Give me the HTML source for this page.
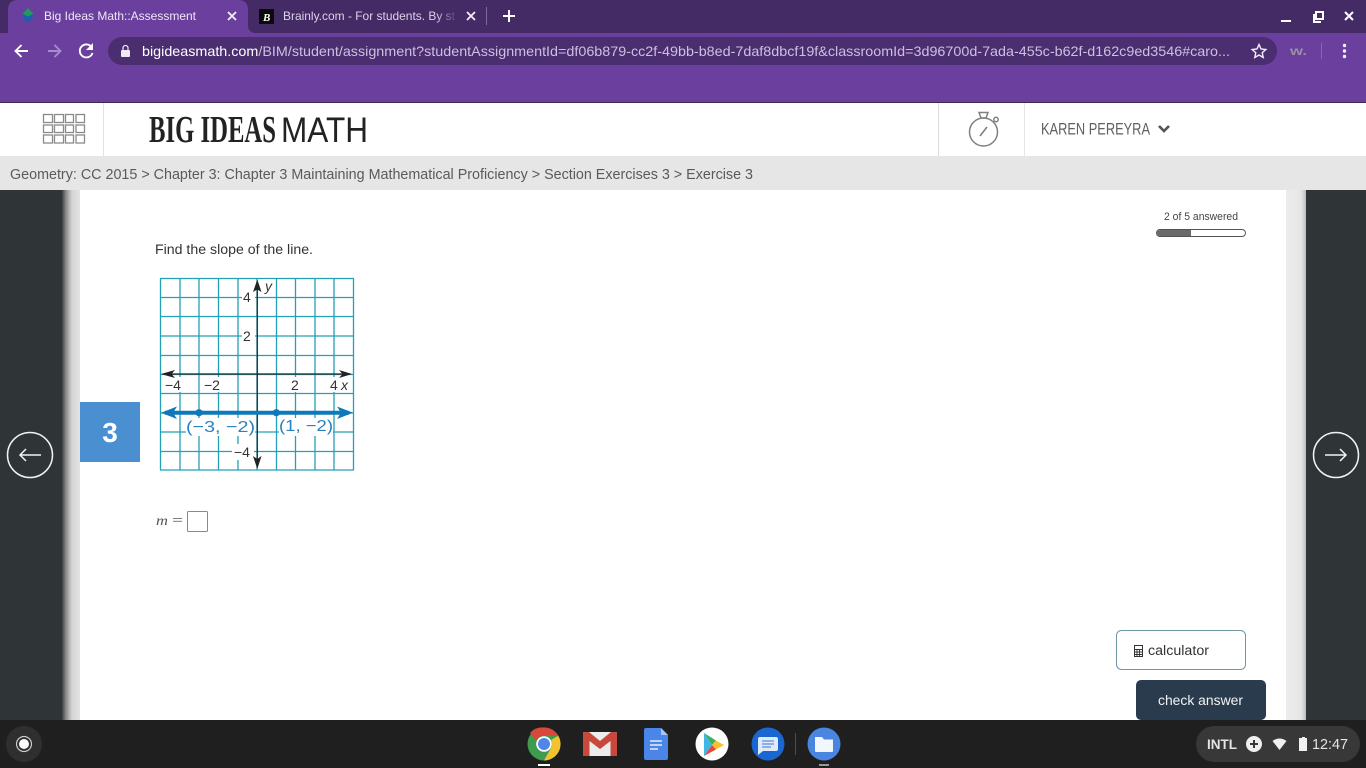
<!DOCTYPE html>
<html><head><meta charset="utf-8"><title>Big Ideas Math</title>
<style>
html,body{margin:0;padding:0;width:1366px;height:768px;overflow:hidden;background:#fff}
svg{display:block;font-family:"Liberation Sans",sans-serif}
</style></head><body>
<svg width="1366" height="768" viewBox="0 0 1366 768" xmlns="http://www.w3.org/2000/svg">
<defs>
<linearGradient id="sl" x1="0" x2="1" y1="0" y2="0"><stop offset="0" stop-color="#3c3f42"/><stop offset=".22" stop-color="#8a8a8a"/><stop offset=".55" stop-color="#d4d4d4"/><stop offset="1" stop-color="#e4e4e4"/></linearGradient>
<linearGradient id="sr" x1="0" x2="1" y1="0" y2="0"><stop offset="0" stop-color="#ececec"/><stop offset=".75" stop-color="#e6e6e6"/><stop offset="1" stop-color="#bdbdbd"/></linearGradient>
<linearGradient id="fade" x1="0" x2="1" y1="0" y2="0"><stop offset="0" stop-color="#452b66" stop-opacity="0"/><stop offset="1" stop-color="#452b66"/></linearGradient>
</defs>
<!-- browser chrome -->
<rect width="1366" height="33" fill="#452b66"/>
<rect y="33" width="1366" height="69" fill="#6a3f9e"/>
<rect y="102" width="1366" height="1" fill="#3d2a55"/>
<path d="M0 33H8V10Q8 0 18 0H238Q248 0 248 10V25Q248 33 256 33H0Z" fill="#6a3f9e"/>
<path d="M0 0H2Q8 0 8 6V26Q8 33 0 33Z" fill="#452b66"/>
<!-- tab 1 -->
<path d="M28 8L33.500 14L28 16.500L22.500 14Z" fill="#1f9a5f"/><path d="M22.500 14L28 16.500L33.500 14V17L28 23L22.500 17Z" fill="#1c5fae"/>
<text x="44" y="20" font-size="12" fill="#efe7f7" textLength="152" lengthAdjust="spacingAndGlyphs">Big Ideas Math::Assessment</text>
<path d="M228 12l8 8M236 12l-8 8" stroke="#f4eefa" stroke-width="1.800"/>
<!-- tab 2 -->
<rect x="259" y="9" width="15" height="15" fill="#0a0a0a"/>
<text x="263" y="21" font-size="11" font-weight="bold" font-style="italic" font-family="'Liberation Serif',serif" fill="#fff">B</text>
<text x="283" y="20" font-size="12" fill="#ddd3e8" textLength="172" lengthAdjust="spacingAndGlyphs">Brainly.com - For students. By st</text>
<rect x="436" y="8" width="22" height="18" fill="url(#fade)"/>
<path d="M467 12l8 8M475 12l-8 8" stroke="#f4eefa" stroke-width="1.800"/>
<rect x="486" y="7" width="1" height="18" fill="#7f6a9b"/>
<path d="M509 10v12M503 16h12" stroke="#fff" stroke-width="2"/>
<!-- window controls -->
<rect x="1281" y="20" width="10" height="2" fill="#fff"/>
<path d="M1313 14h2v7h6v2h-8z" fill="#fff"/>
<rect x="1316" y="12" width="7" height="7" fill="none" stroke="#fff" stroke-width="2"/>
<path d="M1345 12l8 8M1353 12l-8 8" stroke="#fff" stroke-width="2"/>
<!-- toolbar -->
<path d="M28 51H16M21.500 45L15.500 51L21.500 57" fill="none" stroke="#fff" stroke-width="1.900"/>
<path d="M48 51H60M54.500 45L60.500 51L54.500 57" fill="none" stroke="#a88bcb" stroke-width="1.900"/>
<path d="M91.500 47A6.500 6.500 0 1 0 92.500 53" fill="none" stroke="#fff" stroke-width="1.900"/><path d="M93 43v7h-7z" fill="#fff"/>
<rect x="108" y="37" width="1169" height="28" rx="14" fill="#4b2e70"/>
<rect x="121" y="50" width="9" height="7" rx="1" fill="#f0e8f7"/><path d="M123 50v-2a2.500 2.500 0 0 1 5 0v2" fill="none" stroke="#f0e8f7" stroke-width="1.200"/>
<text x="142" y="56" font-size="14" textLength="1088" lengthAdjust="spacingAndGlyphs" fill="#cdbfe0"><tspan fill="#fff">bigideasmath.com</tspan>/BIM/student/assignment?studentAssignmentId=df06b879-cc2f-49bb-b8ed-7daf8dbcf19f&amp;classroomId=3d96700d-7ada-455c-b62f-d162c9ed3546#caro...</text>
<path d="M1259 44.500l2 4.500 4.800.5-3.600 3.200 1 4.800-4.200-2.500-4.200 2.500 1-4.800-3.600-3.200 4.800-.5z" fill="none" stroke="#f4eefa" stroke-width="1.400"/>
<text x="1290" y="55" font-size="12" font-weight="bold" fill="#9a8fa8" textLength="17" lengthAdjust="spacingAndGlyphs">w.</text>
<rect x="1321" y="43" width="1" height="16" fill="#8666ad"/>
<circle cx="1344.500" cy="45.500" r="1.700" fill="#f4eefa"/><circle cx="1344.500" cy="51" r="1.700" fill="#f4eefa"/><circle cx="1344.500" cy="56.500" r="1.700" fill="#f4eefa"/>
<!-- header -->
<rect y="103" width="1366" height="53" fill="#fff"/>
<g fill="none" stroke="#8a8a8a" stroke-width="1.300">
<rect x="43.500" y="114.500" width="9" height="8"/><rect x="54.500" y="114.500" width="9" height="8"/><rect x="65.500" y="114.500" width="8" height="8"/><rect x="76" y="114.500" width="8.500" height="8"/>
<rect x="43.500" y="125" width="9" height="7.500"/><rect x="54.500" y="125" width="9" height="7.500"/><rect x="65.500" y="125" width="8" height="7.500"/><rect x="76" y="125" width="8.500" height="7.500"/>
<rect x="43.500" y="135" width="9" height="8"/><rect x="54.500" y="135" width="9" height="8"/><rect x="65.500" y="135" width="8" height="8"/><rect x="76" y="135" width="8.500" height="8"/>
</g>
<rect x="103" y="103" width="1" height="53" fill="#e2e2e2"/>
<text x="149" y="142" font-size="38" font-weight="bold" font-family="'Liberation Serif',serif" fill="#222" textLength="127" lengthAdjust="spacingAndGlyphs">BIG IDEAS</text>
<text x="281" y="142" font-size="35" fill="#222" textLength="87" lengthAdjust="spacingAndGlyphs">MATH</text>
<rect x="938" y="103" width="1" height="53" fill="#dcdcdc"/><rect x="1024" y="103" width="1" height="53" fill="#e6e6e6"/>
<g fill="none" stroke="#808080" stroke-width="1.500"><circle cx="983.500" cy="132" r="14"/><path d="M979 112.500h9l-2 5.500h-5z"/><circle cx="996" cy="119.500" r="2.200"/><path d="M980 136l7-9" stroke-width="1.600"/></g>
<text x="1041" y="134.500" font-size="16.500" fill="#606060" textLength="109" lengthAdjust="spacingAndGlyphs">KAREN PEREYRA</text>
<path d="M1159 126l5 5 5-5" fill="none" stroke="#555" stroke-width="2.600"/>
<!-- breadcrumb -->
<rect y="156" width="1366" height="34" fill="#e6e6e6"/>
<text x="10" y="179" font-size="15" fill="#5a5a5a" textLength="743" lengthAdjust="spacingAndGlyphs">Geometry: CC 2015 &gt; Chapter 3: Chapter 3 Maintaining Mathematical Proficiency &gt; Section Exercises 3 &gt; Exercise 3</text>
<!-- body -->
<rect y="190" width="62" height="530" fill="#2f3437"/>
<rect x="62" y="190" width="18" height="530" fill="url(#sl)"/>
<rect x="80" y="190" width="1206" height="530" fill="#fff"/>
<rect x="1286" y="190" width="20" height="530" fill="url(#sr)"/>
<rect x="1306" y="190" width="60" height="530" fill="#2f3437"/>
<!-- nav arrows -->
<circle cx="30" cy="455" r="22.500" fill="none" stroke="#f2f2f2" stroke-width="1.500"/>
<path d="M41 455H20M26 449L20 455L26 461" fill="none" stroke="#f2f2f2" stroke-width="1.500"/>
<circle cx="1336" cy="455" r="22.500" fill="none" stroke="#f2f2f2" stroke-width="1.500"/>
<path d="M1325 455H1346M1340 449L1346 455L1340 461" fill="none" stroke="#f2f2f2" stroke-width="1.500"/>
<!-- number -->
<rect x="80" y="402" width="60" height="60" fill="#4a90d0"/>
<text x="110" y="442" font-size="28" font-weight="bold" fill="#fff" text-anchor="middle">3</text>
<!-- progress -->
<text x="1164" y="220" font-size="11" fill="#444" textLength="74" lengthAdjust="spacingAndGlyphs">2 of 5 answered</text>
<rect x="1156.500" y="229.500" width="89" height="7" rx="3.500" fill="#fff" stroke="#555"/>
<path d="M1160 230h31v6h-31a3 3 0 0 1 0-6z" fill="#6a6a6a"/>
<text x="155" y="254" font-size="13.500" fill="#333" textLength="158" lengthAdjust="spacingAndGlyphs">Find the slope of the line.</text>
<!-- graph -->
<g stroke="#22a0b6" stroke-width="1.300" fill="none">
<path d="M160.500 278.500V470M180 278.500V470M199 278.500V470M218.500 278.500V470M238 278.500V470M257 278.500V470M276.500 278.500V470M295.500 278.500V470M315 278.500V470M334 278.500V470M353.500 278.500V470"/>
<path d="M160 278.500H354M160 297.500H354M160 316.500H354M160 336H354M160 355.500H354M160 374.500H354M160 393.500H354M160 413H354M160 432H354M160 451.500H354M160 470H354"/>
</g>
<g fill="#fff">
<rect x="242" y="289" width="13" height="16"/><rect x="242" y="328" width="13" height="16"/>
<rect x="163" y="377" width="23" height="15"/><rect x="202" y="377" width="23" height="15"/><rect x="289" y="377" width="13" height="15"/><rect x="328" y="377" width="22" height="15"/>
<rect x="186" y="418" width="69" height="18"/><rect x="279" y="418" width="54" height="18"/><rect x="232" y="444" width="22" height="16"/><rect x="262" y="279" width="12" height="15"/>
</g>
<path d="M257.300 284V464" stroke="#222" stroke-width="1.200"/>
<path d="M257.300 279.500L261.500 292L257.300 289.500L253 292Z M257.300 469L261.500 456L257.300 459L253 456Z" fill="#222"/>
<path d="M164 374H350" stroke="#222" stroke-width="1.200"/>
<path d="M161 374L175 370L171.500 374L175 378Z M352 374L339 370L342.500 374L339 378Z" fill="#222"/>
<g font-size="14" fill="#333">
<text x="243" y="302">4</text><text x="243" y="341">2</text>
<text x="165" y="390">−4</text><text x="204" y="390">−2</text><text x="291" y="390">2</text><text x="330" y="390">4</text>
<text x="234" y="457">−4</text>
<text x="341" y="390" font-style="italic">x</text><text x="265" y="291" font-style="italic">y</text>
</g>
<path d="M165 412.700H349" stroke="#0f78b8" stroke-width="4"/>
<path d="M161 412.700L177 406.500L173 412.700L177 419Z M353 412.700L337 406.500L341 412.700L337 419Z" fill="#0f78b8"/>
<circle cx="199" cy="412.700" r="3.600" fill="#0f78b8"/><circle cx="276.300" cy="412.700" r="3.600" fill="#0f78b8"/>
<g font-size="16" fill="#2a82be">
<text x="186" y="432" textLength="69" lengthAdjust="spacingAndGlyphs">(−3, −2)</text>
<text x="279" y="431" textLength="54" lengthAdjust="spacingAndGlyphs">(1, −2)</text>
</g>
<!-- answer -->
<text x="156" y="525" font-size="14" font-style="italic" font-family="'Liberation Serif',serif" fill="#555" textLength="12" lengthAdjust="spacingAndGlyphs">m</text>
<text x="172" y="525" font-size="15" font-family="'Liberation Serif',serif" fill="#555" textLength="11" lengthAdjust="spacingAndGlyphs">=</text>
<rect x="187.500" y="511.500" width="20" height="20" rx="1" fill="#fff" stroke="#8a8a8a"/>
<!-- buttons -->
<rect x="1116.500" y="630.500" width="129" height="39" rx="5" fill="#fff" stroke="#6f97a5"/>
<rect x="1134.500" y="645.500" width="8" height="11" fill="none" stroke="#333"/><path d="M1135 649.500h7M1135 652h7M1135 654.500h7M1137 650v6M1139.500 650v6" stroke="#333" stroke-width=".9"/>
<text x="1148" y="655" font-size="13.500" fill="#333" textLength="61" lengthAdjust="spacingAndGlyphs">calculator</text>
<path d="M1136 685a5 5 0 0 1 5-5h120a5 5 0 0 1 5 5v30a5 5 0 0 1-5 5h-120a5 5 0 0 1-5-5z" fill="#2a3b4d"/>
<text x="1158" y="705" font-size="13.500" fill="#f2f2f2" textLength="85" lengthAdjust="spacingAndGlyphs">check answer</text>
<!-- shelf -->
<rect y="720" width="1366" height="48" fill="#1f1f1f"/>
<circle cx="24" cy="744" r="18" fill="#2f2f2f"/><circle cx="24" cy="744" r="5" fill="#fff"/><circle cx="24" cy="744" r="7.500" fill="none" stroke="#c8c8c8" stroke-width="1.200"/>
<!-- chrome -->
<circle cx="544" cy="744" r="16.500" fill="#3f9b4f"/>
<path d="M544 727.500A16.500 16.500 0 0 1 558.300 735.700H544A8 8 0 0 0 536.500 741L530 733A16.500 16.500 0 0 1 544 727.500Z" fill="#d9483b"/>
<path d="M558.300 735.700A16.500 16.500 0 0 1 544 760.500L551 748A8 8 0 0 0 551 740Z" fill="#f2c331"/>
<circle cx="544" cy="744" r="7.800" fill="#fff"/><circle cx="544" cy="744" r="6" fill="#4f86ea"/>
<rect x="538" y="764" width="12" height="2" fill="#fff"/>
<!-- gmail -->
<rect x="583" y="732" width="34" height="24" rx="1.500" fill="#ececec"/>
<path d="M583 733.500V756H589.500V741L600 749L610.500 741V756H617V733.500Q617 732 615 732H611L600 741L589 732H585Q583 732 583 733.500Z" fill="#c9483c"/>
<!-- docs -->
<path d="M646 728H661L668 735V758Q668 760 666 760H646Q644 760 644 758V730Q644 728 646 728Z" fill="#4a86e8"/>
<path d="M661 728L668 735H661Z" fill="#a6c5f7"/>
<path d="M650 741H662M650 745H662M650 749H658" stroke="#e6eefc" stroke-width="1.500"/>
<!-- play -->
<circle cx="712" cy="744" r="16.500" fill="#fff"/>
<path d="M704 733L716 740.500L712 745Z" fill="#3fae5f"/>
<path d="M716 740.500L724 745L716 749.500L712 745Z" fill="#f7c02c"/>
<path d="M704 733V756L712 745Z" fill="#3fb6e6"/>
<path d="M704 756L716 749.500L712 745Z" fill="#e2483f"/>
<!-- messages -->
<circle cx="768" cy="744" r="16.500" fill="#1a67d2"/>
<path d="M760 737H776Q778 737 778 739V749Q778 751 776 751H763L758 755V739Q758 737 760 737Z" fill="#dfe9fa"/>
<path d="M762 741H774M762 744H774M762 747H771" stroke="#5e8fd8" stroke-width="1.200"/>
<rect x="795" y="733" width="1" height="22" fill="#4c4c4c"/>
<!-- files -->
<circle cx="824" cy="744" r="16.500" fill="#4a86e0"/>
<path d="M815 737H822L824 739.500H833V751Q833 752 832 752H816Q815 752 815 751Z" fill="#f2f6fd"/>
<rect x="819" y="764" width="10" height="2" fill="#9a9a9a"/>
<!-- status -->
<rect x="1196" y="726" width="164" height="36" rx="18" fill="#383838"/>
<text x="1207" y="749" font-size="14" font-weight="bold" fill="#e4e4e4" textLength="30" lengthAdjust="spacingAndGlyphs">INTL</text>
<circle cx="1254" cy="744" r="8" fill="#f0f0f0"/><path d="M1254 740v8M1250 744h8" stroke="#383838" stroke-width="2"/>
<path d="M1272.500 741Q1279.500 736 1286.500 741L1279.500 750Z" fill="#f0f0f0"/>
<path d="M1299 738h3v-1h3v1h2v13h-8z" fill="#f0f0f0"/>
<text x="1312" y="749" font-size="14.500" fill="#e4e4e4" textLength="36" lengthAdjust="spacingAndGlyphs">12:47</text>
</svg>
</body></html>
